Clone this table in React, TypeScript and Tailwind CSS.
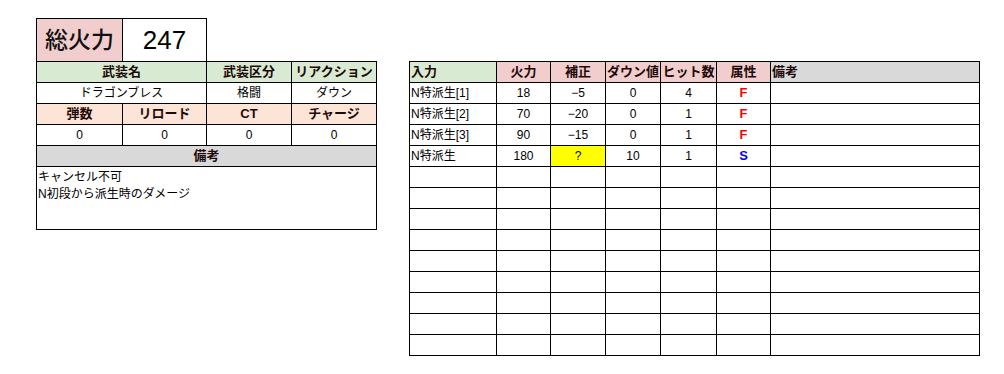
import React from "react";

const FONT = "font-['Liberation_Sans','Noto_Sans_CJK_JP',sans-serif]";

type Row = [string, string, string, string, string, string];

const moves: Row[] = [
  ["N特派生[1]", "18", "−5", "0", "4", "F"],
  ["N特派生[2]", "70", "−20", "0", "1", "F"],
  ["N特派生[3]", "90", "−15", "0", "1", "F"],
  ["N特派生", "180", "?", "10", "1", "S"],
];

const emptyRows = Array.from({ length: 9 }, (_, i) => i);

function Head({ children, bg, className = "" }: { children: React.ReactNode; bg: string; className?: string }) {
  return (
    <div className={`${bg} flex items-center justify-center text-[13px] font-bold text-[#1f0a0a] ${className}`}>
      {children}
    </div>
  );
}

function Cell({ children, className = "" }: { children?: React.ReactNode; className?: string }) {
  return (
    <div className={`flex items-center justify-center bg-white text-[12px] text-black ${className}`}>{children}</div>
  );
}

function WeaponSheet() {
  return (
    <div className="flex w-[341px] flex-col">
      <div className="grid w-[171px] grid-cols-[85px_83px] gap-px bg-black px-px pt-px">
        <div className="flex h-[42px] items-center justify-center bg-[#f2cdcd] text-[23px] font-medium text-[#111]">
          総火力
        </div>
        <div className="flex h-[42px] items-center justify-center bg-white text-[26px] text-black">247</div>
      </div>
      <div className="grid grid-cols-[85px_83px_84px_84px] grid-rows-[20px_20px_20px_20px_20px_62px] gap-px bg-black p-px">
        <Head bg="bg-[#d9ead3]" className="col-span-2">武装名</Head>
        <Head bg="bg-[#d9ead3]">武装区分</Head>
        <Head bg="bg-[#d9ead3]">リアクション</Head>
        <Cell className="col-span-2">ドラゴンブレス</Cell>
        <Cell>格闘</Cell>
        <Cell>ダウン</Cell>
        <Head bg="bg-[#fce4d6]">弾数</Head>
        <Head bg="bg-[#fce4d6]">リロード</Head>
        <Head bg="bg-[#fce4d6]">CT</Head>
        <Head bg="bg-[#fce4d6]">チャージ</Head>
        <Cell>0</Cell>
        <Cell>0</Cell>
        <Cell>0</Cell>
        <Cell>0</Cell>
        <Head bg="bg-[#d9d9d9]" className="col-span-4">備考</Head>
        <div className="col-span-4 bg-white pl-px pt-[2px] text-[12px] leading-[17px] text-black">
          <div>キャンセル不可</div>
          <div>N初段から派生時のダメージ</div>
        </div>
      </div>
    </div>
  );
}

function MoveTable() {
  return (
    <div className="mt-[43px] grid w-[571px] grid-cols-[86px_53px_54px_54px_55px_53px_208px] auto-rows-[20px] gap-px bg-black p-px">
      <Head bg="bg-[#d9ead3]" className="!justify-start pl-px">入力</Head>
      <Head bg="bg-[#f2cdcd]">火力</Head>
      <Head bg="bg-[#f2cdcd]">補正</Head>
      <Head bg="bg-[#f2cdcd]">ダウン値</Head>
      <Head bg="bg-[#f2cdcd]">ヒット数</Head>
      <Head bg="bg-[#f2cdcd]">属性</Head>
      <Head bg="bg-[#d9d9d9]" className="!justify-start pl-px">備考</Head>
      {moves.map((m) => (
        <React.Fragment key={m[0]}>
          <Cell className="!justify-start pl-px text-[12.5px]">{m[0]}</Cell>
          <Cell>{m[1]}</Cell>
          <Cell className={m[2] === "?" ? "!bg-[#ffff00]" : ""}>{m[2]}</Cell>
          <Cell>{m[3]}</Cell>
          <Cell>{m[4]}</Cell>
          <Cell className={`text-[13px] font-bold ${m[5] === "F" ? "!text-[#ff0000]" : "!text-[#0000ff]"}`}>{m[5]}</Cell>
          <Cell />
        </React.Fragment>
      ))}
      {emptyRows.map((i) => (
        <React.Fragment key={i}>
          <Cell />
          <Cell />
          <Cell />
          <Cell />
          <Cell />
          <Cell />
          <Cell />
        </React.Fragment>
      ))}
    </div>
  );
}

export default function App() {
  return (
    <div className={`${FONT} flex h-[374px] w-[1004px] items-start bg-white pl-[36px] pt-[18px]`}>
      <WeaponSheet />
      <div className="ml-[32px]">
        <MoveTable />
      </div>
    </div>
  );
}
